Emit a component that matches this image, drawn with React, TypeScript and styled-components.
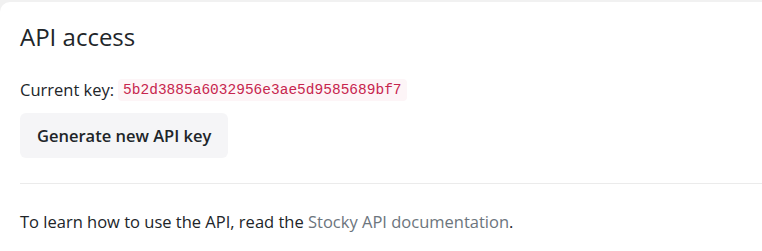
import React from "react";
import styled, { createGlobalStyle } from "styled-components";

const Global = createGlobalStyle`
  html, body { margin: 0; padding: 0; background: #f1f1f1; }
  body { font-family: "Open Sans", "Noto Sans", sans-serif; color: #212529; }
`;

const Page = styled.div`
  padding-top: 2px;
  height: 249px;
  overflow: hidden;
`;

const Card = styled.section`
  background: #ffffff;
  border-radius: 10px 0 0 10px;
  padding: 18px 0 0 20px;
  height: 260px;
  box-sizing: border-box;
  display: flex;
  flex-direction: column;
`;

const Title = styled.h2`
  margin: 0;
  font-size: 24px;
  font-weight: 400;
  line-height: 34px;
  color: #212529;
`;

const KeyRow = styled.div`
  margin-top: 24px;
  display: flex;
  align-items: center;
  gap: 4px;
  font-size: 16.5px;
  line-height: 24px;
`;

const Code = styled.code`
  font-family: "Liberation Mono", "DejaVu Sans Mono", monospace;
  font-size: 14.5px;
  color: #c7254e;
  background: #fdf5f7;
  padding: 1px 5px;
  border-radius: 4px;
  line-height: 20px;
`;

const Button = styled.button`
  margin-top: 11px;
  align-self: flex-start;
  background: #f5f5f7;
  border: none;
  border-radius: 6px;
  padding: 0 17px;
  height: 45px;
  font-family: inherit;
  font-size: 16.5px;
  font-weight: 600;
  color: #212529;
`;

const Divider = styled.hr`
  margin: 25px 0 0 0;
  border: none;
  border-top: 1px solid #ebebeb;
`;

const Note = styled.p`
  margin: 26px 0 0 0;
  font-size: 16.5px;
  line-height: 24px;
`;

const DocLink = styled.a`
  color: #6c757d;
  text-decoration: none;
`;

export default function App() {
  return (
    <>
      <Global />
      <Page>
        <Card>
          <Title>API access</Title>
          <KeyRow>
            <span>Current key:</span>
            <Code>5b2d3885a6032956e3ae5d9585689bf7</Code>
          </KeyRow>
          <Button>Generate new API key</Button>
          <Divider />
          <Note>
            To learn how to use the API, read the{" "}
            <DocLink href="#">Stocky API documentation</DocLink>.
          </Note>
        </Card>
      </Page>
    </>
  );
}
